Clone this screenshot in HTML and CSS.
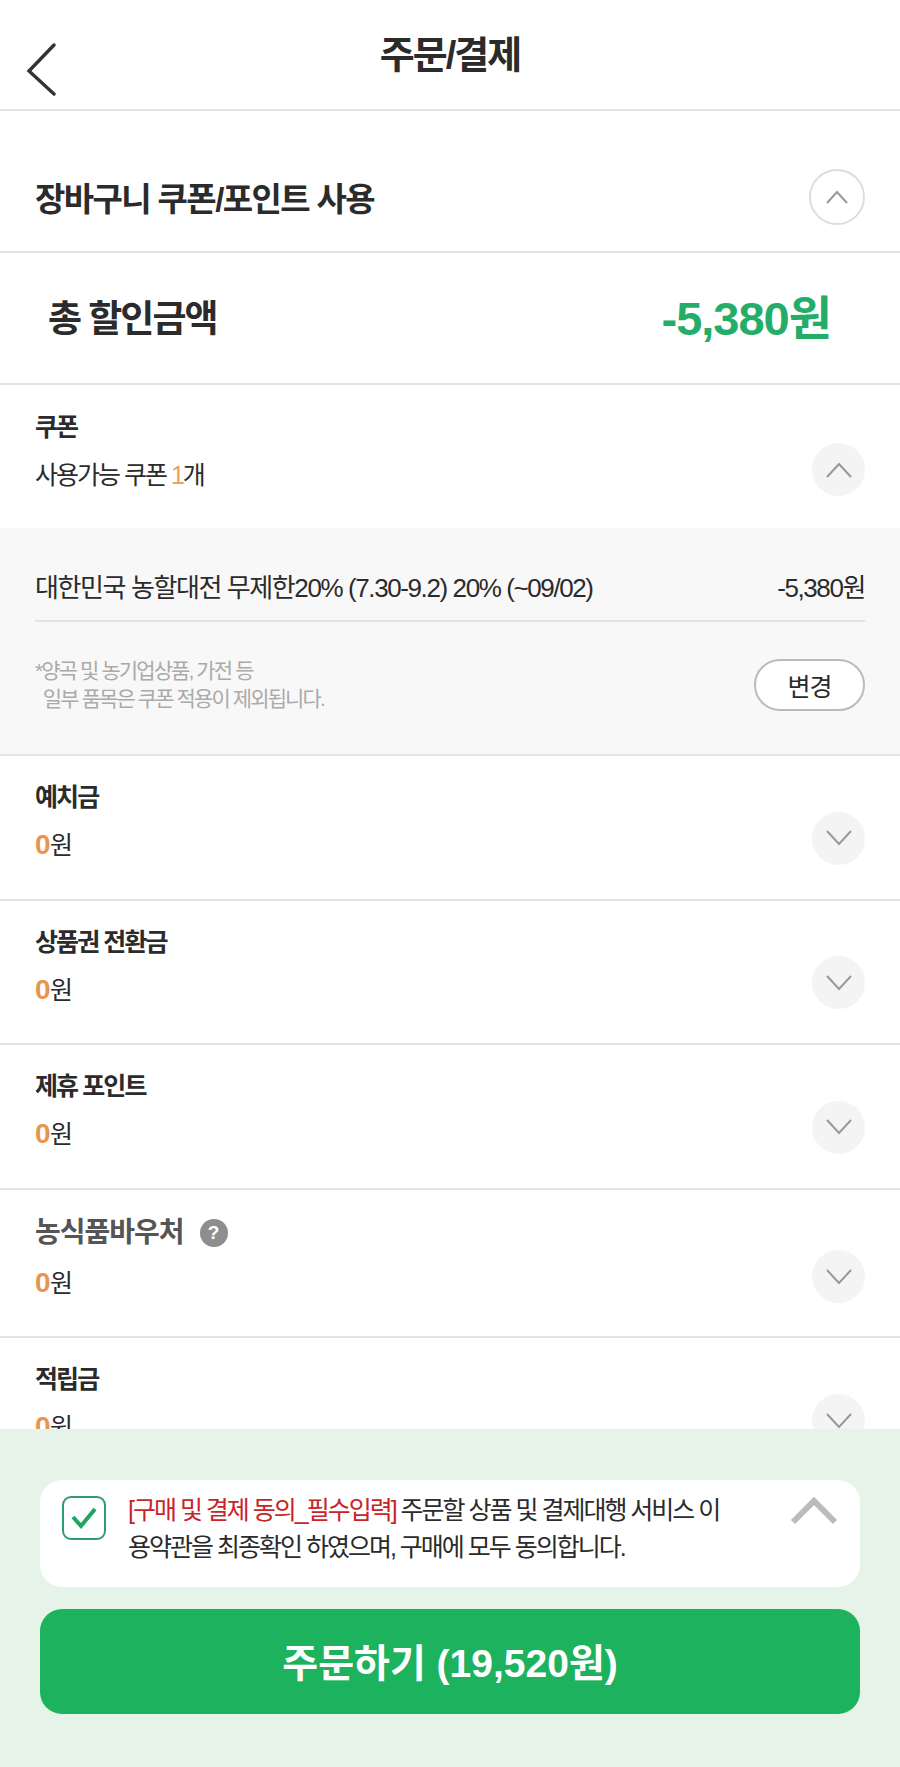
FILE: index.html
```html
<!DOCTYPE html>
<html lang="ko">
<head>
    <meta charset="UTF-8">
    <meta name="viewport" content="width=device-width, initial-scale=1.0">
    <title>주문/결제</title>
    <link rel="stylesheet" href="styles.css">
</head>
<body>

    <header class="top-bar">
        <svg class="back-icon" width="32" height="54" viewBox="0 0 32 54"><path d="M29 3 L4 29 L29 52" fill="none" stroke="#333" stroke-width="3.4" stroke-linecap="round"/></svg>
        <h1>주문/결제</h1>
    </header>

    <section class="cart-head">
        <h2>장바구니 쿠폰/포인트 사용</h2>
        <span class="round-btn outline">
            <svg width="24" height="16" viewBox="0 0 24 16"><path d="M2 14 L12 3 L22 14" fill="none" stroke="#999" stroke-width="2"/></svg>
        </span>
    </section>

    <section class="total">
        <strong>총 할인금액</strong>
        <b>-5,380원</b>
    </section>

    <section class="row row-coupon">
        <div class="row-text">
            <h3>쿠폰</h3>
            <p>사용가능 쿠폰 <em>1</em>개</p>
        </div>
        <span class="round-btn">
            <svg width="28" height="18" viewBox="0 0 28 18"><path d="M2 16 L14 3 L26 16" fill="none" stroke="#999" stroke-width="2"/></svg>
        </span>
    </section>

    <section class="coupon-panel">
        <div class="coupon-line">
            <span>대한민국 농할대전 무제한20% (7.30-9.2) 20% (~09/02)</span>
            <span>-5,380원</span>
        </div>
        <div class="coupon-note">
            <p>*양곡 및 농기업상품, 가전 등<br>&nbsp;&nbsp;일부 품목은 쿠폰 적용이 제외됩니다.</p>
            <button>변경</button>
        </div>
    </section>

    <section class="row">
        <div class="row-text">
            <h3>예치금</h3>
            <p><em class="zero">0</em>원</p>
        </div>
        <span class="round-btn">
            <svg width="28" height="18" viewBox="0 0 28 18"><path d="M2 2 L14 15 L26 2" fill="none" stroke="#999" stroke-width="2"/></svg>
        </span>
    </section>

    <section class="row">
        <div class="row-text">
            <h3>상품권 전환금</h3>
            <p><em class="zero">0</em>원</p>
        </div>
        <span class="round-btn">
            <svg width="28" height="18" viewBox="0 0 28 18"><path d="M2 2 L14 15 L26 2" fill="none" stroke="#999" stroke-width="2"/></svg>
        </span>
    </section>

    <section class="row">
        <div class="row-text">
            <h3>제휴 포인트</h3>
            <p><em class="zero">0</em>원</p>
        </div>
        <span class="round-btn">
            <svg width="28" height="18" viewBox="0 0 28 18"><path d="M2 2 L14 15 L26 2" fill="none" stroke="#999" stroke-width="2"/></svg>
        </span>
    </section>

    <section class="row row-voucher">
        <div class="row-text">
            <h3 class="voucher">농식품바우처 <i class="help">?</i></h3>
            <p><em class="zero">0</em>원</p>
        </div>
        <span class="round-btn">
            <svg width="28" height="18" viewBox="0 0 28 18"><path d="M2 2 L14 15 L26 2" fill="none" stroke="#999" stroke-width="2"/></svg>
        </span>
    </section>

    <section class="row row-last">
        <div class="row-text">
            <h3>적립금</h3>
            <p><em class="zero">0</em>원</p>
        </div>
        <span class="round-btn">
            <svg width="28" height="18" viewBox="0 0 28 18"><path d="M2 2 L14 15 L26 2" fill="none" stroke="#999" stroke-width="2"/></svg>
        </span>
    </section>

    <footer class="order-bar">
        <div class="agree">
            <span class="check">
                <svg width="30" height="26" viewBox="0 0 30 26"><path d="M4 12 L12 21 L26 4" fill="none" stroke="#1fa463" stroke-width="4"/></svg>
            </span>
            <p><span class="req">[구매 및 결제 동의_필수입력]</span> 주문할 상품 및 결제대행 서비스 이용약관을 최종확인 하였으며, 구매에 모두 동의합니다.</p>
            <svg class="agree-arrow" width="48" height="28" viewBox="0 0 48 28"><path d="M3 25 L24 4 L45 25" fill="none" stroke="#bbb" stroke-width="6"/></svg>
        </div>
        <button class="order-btn">주문하기 (19,520원)</button>
    </footer>

</body>
</html>
```

FILE: styles.css
```css
* {
    box-sizing: border-box;
}
body {
    margin: 0;
    height: 1767px;
    overflow: hidden;
    position: relative;
    background-color: #fff;
    color: #2b2b2b;
    font-family: "Liberation Sans", "Noto Sans CJK KR", sans-serif;
}
h1, h2, h3, p {
    margin: 0;
}
em {
    font-style: normal;
    color: #e9a35c;
}
section, .top-bar {
    border-bottom: 2px solid #e4e4e4;
}
.top-bar {
    height: 111px;
    position: relative;
    display: flex;
    justify-content: center;
    padding-top: 27px;
}
.back-icon {
    position: absolute;
    left: 25px;
    top: 42px;
}
h1 {
    font-size: 38px;
    line-height: 56px;
    font-weight: 700;
    letter-spacing: -2px;
}
.cart-head {
    height: 142px;
    padding: 32px 35px 0;
    display: flex;
    align-items: center;
    justify-content: space-between;
}
h2 {
    font-size: 33px;
    font-weight: 700;
    letter-spacing: -1.6px;
}
.round-btn {
    width: 53px;
    height: 53px;
    border-radius: 50%;
    background-color: #f4f4f4;
    display: flex;
    align-items: center;
    justify-content: center;
    flex: none;
}
.round-btn.outline {
    width: 56px;
    height: 56px;
    background-color: #fff;
    border: 2px solid #ddd;
}
.total {
    height: 132px;
    padding: 0 69px 4px 48px;
    display: flex;
    align-items: center;
    justify-content: space-between;
}
.total strong {
    font-size: 37px;
    font-weight: 700;
    letter-spacing: -2px;
}
.total b {
    margin-top: -4px;
    font-size: 47px;
    font-weight: 700;
    letter-spacing: -1px;
    color: #24ad68;
}
.row {
    height: 144.5px;
    padding: 0 35px;
    display: flex;
    justify-content: space-between;
    align-items: center;
}
.row-text {
    padding-bottom: 12px;
}
.row h3 {
    font-size: 25px;
    line-height: 40px;
    font-weight: 700;
    letter-spacing: -1.9px;
    margin-bottom: 8px;
}
.row p {
    font-size: 25px;
    line-height: 40px;
    letter-spacing: -2px;
}
.zero {
    font-size: 28px;
    font-weight: 700;
    color: #e8954f;
    letter-spacing: -0.5px;
}
.row .round-btn {
    margin-top: 22px;
}
.row-coupon {
    height: 143px;
    border-bottom: none;
}
.row-coupon .round-btn {
    margin-top: 26px;
}
.row-voucher {
    height: 148px;
}
.row-voucher .row-text {
    padding-bottom: 10px;
}
.row-voucher .round-btn {
    margin-top: 28px;
}
.row-last {
    border-bottom: none;
}
.row-last .row-text {
    padding-bottom: 14px;
}
.row .voucher {
    color: #555;
    font-size: 28px;
    letter-spacing: -1px;
    display: flex;
    align-items: center;
    gap: 16px;
    margin-bottom: 10px;
}
.help {
    width: 28px;
    height: 28px;
    border-radius: 50%;
    background-color: #8e8e8e;
    color: #fff;
    font-size: 19px;
    font-style: normal;
    font-weight: 700;
    letter-spacing: 0;
    line-height: 28px;
    text-align: center;
}
.coupon-panel {
    height: 228px;
    padding: 0 35px;
    background-color: #f8f8f8;
}
.coupon-line {
    height: 94px;
    border-bottom: 2px solid #e2e2e2;
    display: flex;
    align-items: center;
    justify-content: space-between;
    font-size: 26px;
    letter-spacing: -1.4px;
    padding-top: 22px;
}
.coupon-note {
    height: 132px;
    display: flex;
    align-items: center;
    justify-content: space-between;
    padding-bottom: 6px;
}
.coupon-note p {
    font-size: 21px;
    line-height: 28px;
    letter-spacing: -1.9px;
    color: #aaa;
}
.coupon-note button {
    width: 111px;
    height: 52px;
    background-color: #fff;
    border: 2px solid #bbb;
    border-radius: 26px;
    font-family: inherit;
    font-size: 25px;
    letter-spacing: -1px;
    color: #2b2b2b;
    padding: 0;
}
.order-bar {
    position: absolute;
    left: 0;
    right: 0;
    bottom: 0;
    height: 338px;
    padding: 51px 40px 0;
    background-color: #e6f3e9;
}
.agree {
    height: 107px;
    background-color: #fff;
    border-radius: 22px;
    padding: 12px 22px 0 22px;
    display: flex;
    align-items: flex-start;
}
.check {
    width: 44px;
    height: 44px;
    margin-top: 4px;
    border: 2px solid #2f9e6e;
    border-radius: 9px;
    display: flex;
    align-items: center;
    justify-content: center;
    flex: none;
}
.agree p {
    width: 610px;
    margin-left: 22px;
    font-size: 25px;
    line-height: 37px;
    letter-spacing: -2px;
    word-break: break-all;
    flex: none;
}
.req {
    color: #c8242a;
}
.agree-arrow {
    margin: 5px 0 0 auto;
    flex: none;
}
.order-btn {
    display: block;
    width: 100%;
    height: 105px;
    margin-top: 22px;
    padding: 0 0 4px;
    border: none;
    border-radius: 22px;
    background-color: #1db25d;
    color: #fff;
    font-family: inherit;
    font-size: 39px;
    font-weight: 700;
    letter-spacing: 0;
}
```
